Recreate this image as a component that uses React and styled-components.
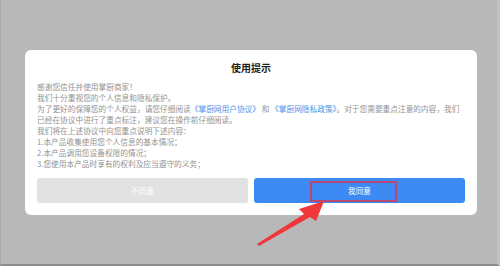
import React from 'react';
import styled, {createGlobalStyle} from 'styled-components';

const GlobalStyle = createGlobalStyle`
    html, body {
        margin: 0;
        padding: 0;
        background: #b8b8b8;
    }
    body {
        font-family: "Noto Sans CJK SC", "Noto Sans", sans-serif;
    }
`;

const Screen = styled.div`
    position: relative;
    width: 500px;
    height: 266px;
    box-sizing: border-box;
    padding: 50px 24px 0 24px;
    background: #b8b8b8;
    border-left: 1px solid #a9a9a9;
    border-right: 3px solid #c2c2c2;
    border-bottom: 2px solid #8c8c8c;
    overflow: hidden;
`;

const Dialog = styled.div`
    width: 452px;
    height: 165px;
    box-sizing: border-box;
    padding: 12px;
    background: #fff;
    border-radius: 6px;
    display: flex;
    flex-direction: column;
`;

const Title = styled.div`
    font-size: 10px;
    line-height: 12px;
    font-weight: 700;
    color: #1f1f1f;
    text-align: center;
    margin-bottom: 7px;
`;

const Body = styled.div`
    font-size: 7.7px;
    line-height: 11px;
    color: #939393;
`;

const Line = styled.div`
    white-space: nowrap;
`;

const Link = styled.span`
    color: #4d92ea;
`;

const Actions = styled.div`
    display: flex;
    gap: 6px;
    margin-top: 9px;
`;

const Button = styled.div`
    position: relative;
    flex: 1;
    height: 25px;
    border-radius: 3px;
    display: flex;
    align-items: center;
    justify-content: center;
    font-size: 7.6px;
    color: #fff;
    background: ${({primary}) => (primary ? '#3d8af5' : '#e2e2e2')};
    box-shadow: ${({primary}) => (primary ? 'none' : '0 0 1px rgba(0,0,0,0.08)')};
`;

const Highlight = styled.div`
    position: absolute;
    left: 56px;
    top: 3px;
    width: 87px;
    height: 21px;
    box-sizing: border-box;
    border: 2px solid #b44a72;
`;

const Arrow = styled.svg`
    position: absolute;
    left: 0;
    top: 0;
    pointer-events: none;
`;

const lines = [
    '感谢您信任并使用掌厨商家！',
    '我们十分重视您的个人信息和隐私保护。',
    null,
    '已经在协议中进行了重点标注，建议您在操作前仔细阅读。',
    '我们将在上述协议中向您重点说明下述内容：',
    '1.本产品收集使用您个人信息的基本情况；',
    '2.本产品调用您设备权限的情况；',
    '3.您使用本产品时享有的权利及应当遵守的义务；',
];

const App = () => {
    return (
        <>
            <GlobalStyle/>
            <Screen>
                <Dialog>
                    <Title>使用提示</Title>
                    <Body>
                        {lines.map((text, idx) => (
                            text === null ? (
                                <Line key={idx}>
                                    为了更好的保障您的个人权益，请您仔细阅读<Link>《掌厨网用户协议》</Link> 和 <Link>《掌厨网隐私政策》</Link>。对于您需要重点注意的内容，我们
                                </Line>
                            ) : (
                                <Line key={idx}>{text}</Line>
                            )
                        ))}
                    </Body>
                    <Actions>
                        <Button>不同意</Button>
                        <Button primary>
                            我同意
                            <Highlight/>
                        </Button>
                    </Actions>
                </Dialog>
                <Arrow width="500" height="266" viewBox="0 0 500 266">
                    <polygon
                        points="256,244 303,214 298,209 323,201 315,221 309,217 258,246"
                        fill="#f0383a"
                    />
                </Arrow>
            </Screen>
        </>
    );
};

export default App;
